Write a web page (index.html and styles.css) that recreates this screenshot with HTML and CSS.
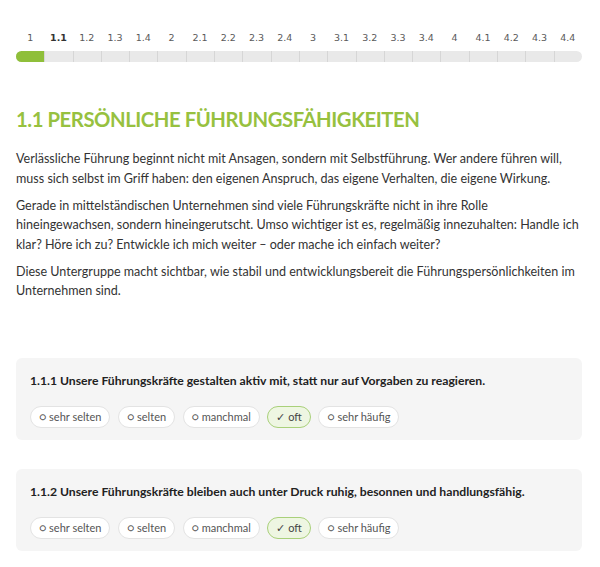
FILE: index.html
```html
<!DOCTYPE html>
<html lang="de">
<head>
<meta charset="utf-8">
<link rel="stylesheet" href="styles.css">
</head>
<body>
<div class="page">
  <nav class="steps">
    <div class="labels">
      <span>1</span><span class="cur">1.1</span><span>1.2</span><span>1.3</span><span>1.4</span>
      <span>2</span><span>2.1</span><span>2.2</span><span>2.3</span><span>2.4</span>
      <span>3</span><span>3.1</span><span>3.2</span><span>3.3</span><span>3.4</span>
      <span>4</span><span>4.1</span><span>4.2</span><span>4.3</span><span>4.4</span>
    </div>
    <div class="bar">
      <i class="done"></i><i></i><i></i><i></i><i></i><i></i><i></i><i></i><i></i><i></i>
      <i></i><i></i><i></i><i></i><i></i><i></i><i></i><i></i><i></i><i></i>
    </div>
  </nav>

  <h1 class="title">1.1 PERSÖNLICHE FÜHRUNGSFÄHIGKEITEN</h1>

  <p class="text">Verlässliche Führung beginnt nicht mit Ansagen, sondern mit Selbstführung. Wer andere führen will, muss sich selbst im Griff haben: den eigenen Anspruch, das eigene Verhalten, die eigene Wirkung.</p>
  <p class="text">Gerade in mittelständischen Unternehmen sind viele Führungskräfte nicht in ihre Rolle<br>hineingewachsen, sondern hineingerutscht. Umso wichtiger ist es, regelmäßig innezuhalten: Handle ich klar? Höre ich zu? Entwickle ich mich weiter – oder mache ich einfach weiter?</p>
  <p class="text">Diese Untergruppe macht sichtbar, wie stabil und entwicklungsbereit die Führungspersönlichkeiten im Unternehmen sind.</p>

  <section class="questions">
    <div class="card">
      <div class="q">1.1.1 Unsere Führungskräfte gestalten aktiv mit, statt nur auf Vorgaben zu reagieren.</div>
      <div class="chips">
        <span class="chip">○ sehr selten</span>
        <span class="chip">○ selten</span>
        <span class="chip">○ manchmal</span>
        <span class="chip sel">✓ oft</span>
        <span class="chip">○ sehr häufig</span>
      </div>
    </div>
    <div class="card">
      <div class="q">1.1.2 Unsere Führungskräfte bleiben auch unter Druck ruhig, besonnen und handlungsfähig.</div>
      <div class="chips">
        <span class="chip">○ sehr selten</span>
        <span class="chip">○ selten</span>
        <span class="chip">○ manchmal</span>
        <span class="chip sel">✓ oft</span>
        <span class="chip">○ sehr häufig</span>
      </div>
    </div>
  </section>
</div>
</body>
</html>
```

FILE: styles.css
```css
html, body {
  margin: 0;
  padding: 0;
  background: #ffffff;
}

.page {
  padding: 31px 18px 0 16px;
  font-family: Lato, "Noto Sans", sans-serif;
  color: #333333;
}

.steps .labels {
  display: grid;
  grid-template-columns: repeat(20, 1fr);
  font-family: "DejaVu Sans", sans-serif;
  font-size: 9.5px;
  line-height: 14px;
  color: #5a5a5a;
  text-align: center;
}

.steps .labels .cur {
  font-weight: bold;
  color: #333333;
}

.bar {
  display: grid;
  grid-template-columns: repeat(20, 1fr);
  height: 11px;
  margin-top: 6px;
  background: #e9e9e9;
  border-radius: 6px;
  overflow: hidden;
}

.bar i {
  display: block;
  border-left: 1px solid #d6d6d6;
}

.bar i:first-child {
  border-left: none;
}

.bar i.done {
  background: #8fbf3a;
}

.title {
  margin: 43px 0 0;
  font-size: 20.3px;
  line-height: 29px;
  font-weight: 700;
  color: #97c13f;
  letter-spacing: -0.45px;
}

.text {
  margin: 0;
  font-size: 12.55px;
  line-height: 19.5px;
  color: #333333;
}

.title + .text {
  margin-top: 15px;
}

.text + .text {
  margin-top: 7.5px;
}

.questions {
  margin-top: 57px;
  display: flex;
  flex-direction: column;
  gap: 29px;
}

.card {
  background: #f5f5f5;
  border-radius: 6px;
  padding: 14px 14px 12px;
}

.q {
  font-size: 12.2px;
  line-height: 18px;
  font-weight: 700;
  color: #222222;
}

.chips {
  display: flex;
  gap: 7.5px;
  margin-top: 16px;
}

.chip {
  display: inline-flex;
  align-items: center;
  height: 22px;
  box-sizing: border-box;
  padding: 0 8px;
  border: 1px solid #e3e3e3;
  border-radius: 11px;
  background: #ffffff;
  font-size: 11px;
  color: #555555;
  white-space: nowrap;
}

.chip.sel {
  background: #eef6e2;
  border-color: #a9d07a;
  color: #444444;
}
```
